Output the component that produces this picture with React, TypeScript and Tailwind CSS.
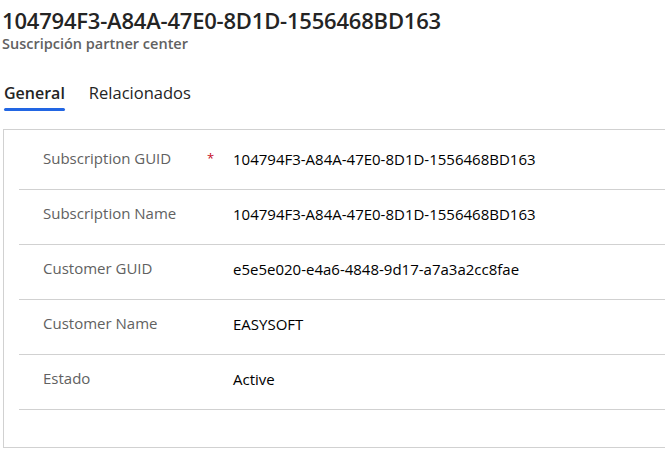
import React from 'react';

const rows = [
  { label: 'Subscription GUID', value: '104794F3-A84A-47E0-8D1D-1556468BD163', required: true },
  { label: 'Subscription Name', value: '104794F3-A84A-47E0-8D1D-1556468BD163' },
  { label: 'Customer GUID', value: 'e5e5e020-e4a6-4848-9d17-a7a3a2cc8fae' },
  { label: 'Customer Name', value: 'EASYSOFT' },
  { label: 'Estado', value: 'Active' },
];

export default function App() {
  return (
    <div
      className="w-[665px] h-[475px] overflow-hidden bg-white text-[#242424]"
      style={{ fontFamily: '"Segoe UI", "Open Sans", "Noto Sans", sans-serif' }}
    >
      <div className="pl-[2px] pt-[6px]">
        <h1 className="text-[22px] leading-[28px] font-semibold tracking-[-0.2px]">
          104794F3-A84A-47E0-8D1D-1556468BD163
        </h1>
        <p className="text-[14.5px] leading-[20px] font-semibold text-[#616161]">
          Suscripción partner center
        </p>
      </div>

      <div className="flex gap-[24px] pl-[4px] mt-[28px] h-[47px]">
        <div className="flex flex-col">
          <span className="text-[16px] leading-[22px] font-semibold text-[#242424]">General</span>
          <span className="mt-[4px] h-[3px] rounded-full bg-[#2266e3]" />
        </div>
        <span className="text-[16.5px] leading-[22px] text-[#242424]">Relacionados</span>
      </div>

      <div className="ml-[3px] w-[700px] h-[319px] border border-[#d1d1d1] pt-[5px]">
        <div className="pl-[15px]">
          {rows.map((r) => (
            <div key={r.label} className="flex h-[55px] border-b border-[#d1d1d1] pt-[13px] pl-[24px]">
              <div className="w-[190px] flex text-[15px] leading-[20px] text-[#616161]">
                <span className="w-[164px]">{r.label}</span>
                {r.required && <span className="text-[#c50f1f] text-[13px]">*</span>}
              </div>
              <div className="text-[15px] leading-[20px] font-medium text-black pt-[1px]">
                {r.value}
              </div>
            </div>
          ))}
        </div>
      </div>
    </div>
  );
}
